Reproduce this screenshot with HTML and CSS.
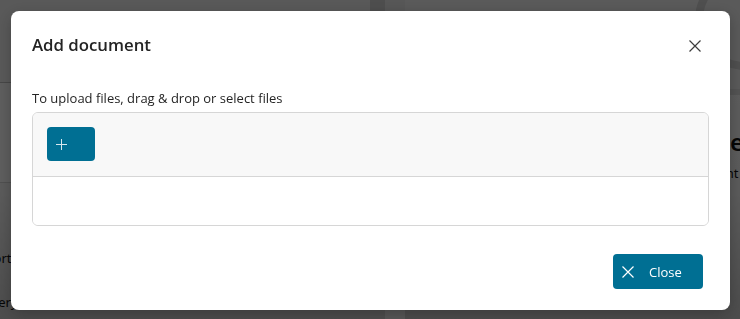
FILE: index.html
```html
<!DOCTYPE html>
<html lang="en">
<head>
<meta charset="utf-8">
<title>Add document</title>
<link rel="stylesheet" href="styles.css">
</head>
<body>
<div class="page">
  <div class="pane pane-left">
    <div class="left-top"></div>
    <div class="left-mid"></div>
    <p class="bg-text bg-text-a">Importance</p>
    <p class="bg-text bg-text-b">Delivery day</p>
  </div>
  <div class="pane-divider"></div>
  <div class="pane pane-right">
    <div class="right-top"><div class="ring"></div></div>
    <h3 class="bg-heading">Owner</h3>
    <p class="bg-text bg-text-c">Comment</p>
  </div>
</div>

<div class="overlay">
  <div class="dialog" role="dialog" aria-label="Add document">
    <div class="dialog-header">
      <h2 class="dialog-title">Add document</h2>
      <button class="icon-btn" aria-label="Close">
        <svg width="12" height="12" viewBox="0 0 12 12"><path d="M0.5 0.5 L11.5 11.5 M11.5 0.5 L0.5 11.5" stroke="#3d3d3d" stroke-width="1.2" fill="none"/></svg>
      </button>
    </div>
    <div class="dialog-body">
      <p class="upload-label">To upload files, drag &amp; drop or select files</p>
      <div class="dropzone">
        <div class="dz-toolbar">
          <button class="add-btn" aria-label="Add file">
            <svg width="11" height="11" viewBox="0 0 11 11"><path d="M5.5 0 V11 M0 5.5 H11" stroke="#d7e8ee" stroke-width="1" fill="none"/></svg>
          </button>
        </div>
        <div class="dz-list"></div>
      </div>
    </div>
    <div class="dialog-footer">
      <button class="close-btn">
        <svg width="12" height="12" viewBox="0 0 12 12"><path d="M0.5 0.5 L11.5 11.5 M11.5 0.5 L0.5 11.5" stroke="#ffffff" stroke-width="1.2" fill="none"/></svg>
        <span>Close</span>
      </button>
    </div>
  </div>
</div>
</body>
</html>
```

FILE: styles.css
```css
* { box-sizing: border-box; }

html, body {
  margin: 0;
  padding: 0;
  width: 740px;
  height: 319px;
  overflow: hidden;
}

body {
  font-family: "Open Sans", "Noto Sans", sans-serif;
  background: #ffffff;
  color: #242424;
}

/* ---------- background page ---------- */
.page {
  display: grid;
  grid-template-columns: 370px 35px 1fr;
  height: 319px;
  background: linear-gradient(#ffffff 0%, #f6f6f6 60%, #cfcfcf 100%);
}

.pane { display: flex; flex-direction: column; }

.left-top {
  height: 83px;
  border-bottom: 1px solid #c0c0c0;
  background: #f2f2f2;
}
.left-mid {
  height: 100px;
  background: #ffffff;
  border-bottom: 1px solid #d8d8d8;
}

.bg-text {
  margin: 0;
  font-family: "Noto Sans", sans-serif;
  font-size: 13px;
  color: #111;
  white-space: nowrap;
}
.bg-text-a { margin-top: 66px; margin-left: -31px; }
.bg-text-b { margin-top: 26px; margin-left: -32px; }

.pane-divider {
  background: linear-gradient(90deg, #d4d4d4 0 15px, #ececec 15px 35px);
}

.right-top {
  height: 95px;
  position: relative;
  overflow: hidden;
  background: #f4f4f4;
  border-bottom: 6px solid #e2e2e2;
}
.ring {
  position: absolute;
  right: -40px;
  top: -30px;
  width: 100px;
  height: 100px;
  border: 8px solid #d7d7d7;
  border-radius: 50%;
}
.bg-heading {
  margin: 30px 0 0 271px;
  font-family: "Noto Sans", sans-serif;
  font-size: 24px;
  font-weight: 600;
  color: #111;
  white-space: nowrap;
}
.bg-text-c { margin: 6px 0 0 273px; }

/* ---------- overlay & dialog ---------- */
.overlay {
  position: fixed;
  inset: 0;
  background: rgba(0, 0, 0, 0.63);
  padding: 11px 10px 9px 11px;
  display: flex;
}

.dialog {
  flex: 1;
  background: #ffffff;
  border-radius: 8px;
  padding: 21px;
  display: flex;
  flex-direction: column;
  box-shadow: 0 4px 16px rgba(0,0,0,0.25);
}

.dialog-header {
  display: flex;
  align-items: center;
  justify-content: space-between;
  height: 24px;
}

.dialog-title {
  margin: 0;
  font-size: 16.8px;
  font-weight: 600;
  color: #242424;
}

.icon-btn {
  border: 0;
  background: transparent;
  padding: 0;
  width: 24px;
  height: 24px;
  display: flex;
  align-items: center;
  justify-content: center;
  margin-top: 4px;
  margin-right: 2px;
}

.dialog-body {
  margin-top: 33px;
}

.upload-label {
  margin: 0;
  font-size: 13px;
  line-height: 18px;
  color: #242424;
}

.dropzone {
  margin-top: 5px;
  border: 1px solid #d6d6d6;
  border-radius: 6px;
  overflow: hidden;
}

.dz-toolbar {
  background: #f8f8f8;
  padding: 14px 14px 15px;
  border-bottom: 1px solid #d6d6d6;
}

.add-btn {
  width: 48px;
  height: 34px;
  border: 0;
  border-radius: 4px;
  background: #006f93;
  display: flex;
  align-items: center;
  padding: 0 0 0 9px;
}

.dz-list {
  height: 48px;
  background: #ffffff;
}

.dialog-footer {
  margin-top: 28px;
  display: flex;
  justify-content: flex-end;
  padding-right: 6px;
}

.close-btn {
  height: 35px;
  width: 90px;
  border: 0;
  border-radius: 4px;
  background: #006f93;
  color: #ffffff;
  font-family: "Open Sans", "Noto Sans", sans-serif;
  font-size: 13px;
  display: flex;
  align-items: center;
  gap: 15px;
  padding: 0 0 0 9px;
}
```
